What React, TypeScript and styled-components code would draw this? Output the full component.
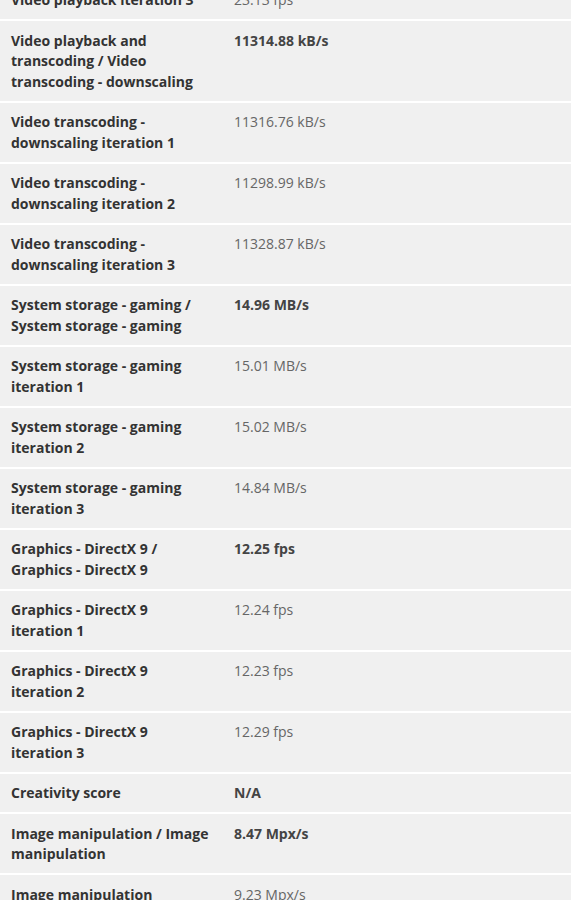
import React from "react";
import styled, { createGlobalStyle } from "styled-components";

const Global = createGlobalStyle`
  html, body {
    margin: 0;
    padding: 0;
    background: #ffffff;
    overflow: hidden;
  }
  body {
    font-family: "Open Sans", "DejaVu Sans", sans-serif;
    font-size: 14px;
  }
`;

const Table = styled.div`
  display: flex;
  flex-direction: column;
  margin-top: -19.5px;
  width: 571px;
`;

const Row = styled.div`
  display: grid;
  grid-template-columns: 223px 1fr;
  background: #f0f0f0;
  border-bottom: 2px solid #ffffff;
  padding: 9.5px 0 8.5px;
  line-height: 20.5px;
`;

const Label = styled.div`
  padding: 0 12px 0 11px;
  font-weight: 700;
  color: #333333;
`;

const Value = styled.div<{ $strong?: boolean }>`
  padding-left: 11px;
  font-weight: ${(p) => (p.$strong ? 700 : 400)};
  color: ${(p) => (p.$strong ? "#444444" : "#666666")};
`;

type Item = { label: string; value: string; strong?: boolean };

const items: Item[] = [
  { label: "Video playback iteration 3", value: "23.13 fps" },
  {
    label: "Video playback and transcoding / Video transcoding - downscaling",
    value: "11314.88 kB/s",
    strong: true,
  },
  { label: "Video transcoding - downscaling iteration 1", value: "11316.76 kB/s" },
  { label: "Video transcoding - downscaling iteration 2", value: "11298.99 kB/s" },
  { label: "Video transcoding - downscaling iteration 3", value: "11328.87 kB/s" },
  { label: "System storage - gaming / System storage - gaming", value: "14.96 MB/s", strong: true },
  { label: "System storage - gaming iteration 1", value: "15.01 MB/s" },
  { label: "System storage - gaming iteration 2", value: "15.02 MB/s" },
  { label: "System storage - gaming iteration 3", value: "14.84 MB/s" },
  { label: "Graphics - DirectX 9 / Graphics - DirectX 9", value: "12.25 fps", strong: true },
  { label: "Graphics - DirectX 9 iteration 1", value: "12.24 fps" },
  { label: "Graphics - DirectX 9 iteration 2", value: "12.23 fps" },
  { label: "Graphics - DirectX 9 iteration 3", value: "12.29 fps" },
  { label: "Creativity score", value: "N/A", strong: true },
  { label: "Image manipulation / Image manipulation", value: "8.47 Mpx/s", strong: true },
  { label: "Image manipulation iteration 1", value: "9.23 Mpx/s" },
];

export default function App() {
  return (
    <>
      <Global />
      <Table>
        {items.map((it, i) => (
          <Row key={i}>
            <Label>{it.label}</Label>
            <Value $strong={it.strong}>{it.value}</Value>
          </Row>
        ))}
      </Table>
    </>
  );
}
